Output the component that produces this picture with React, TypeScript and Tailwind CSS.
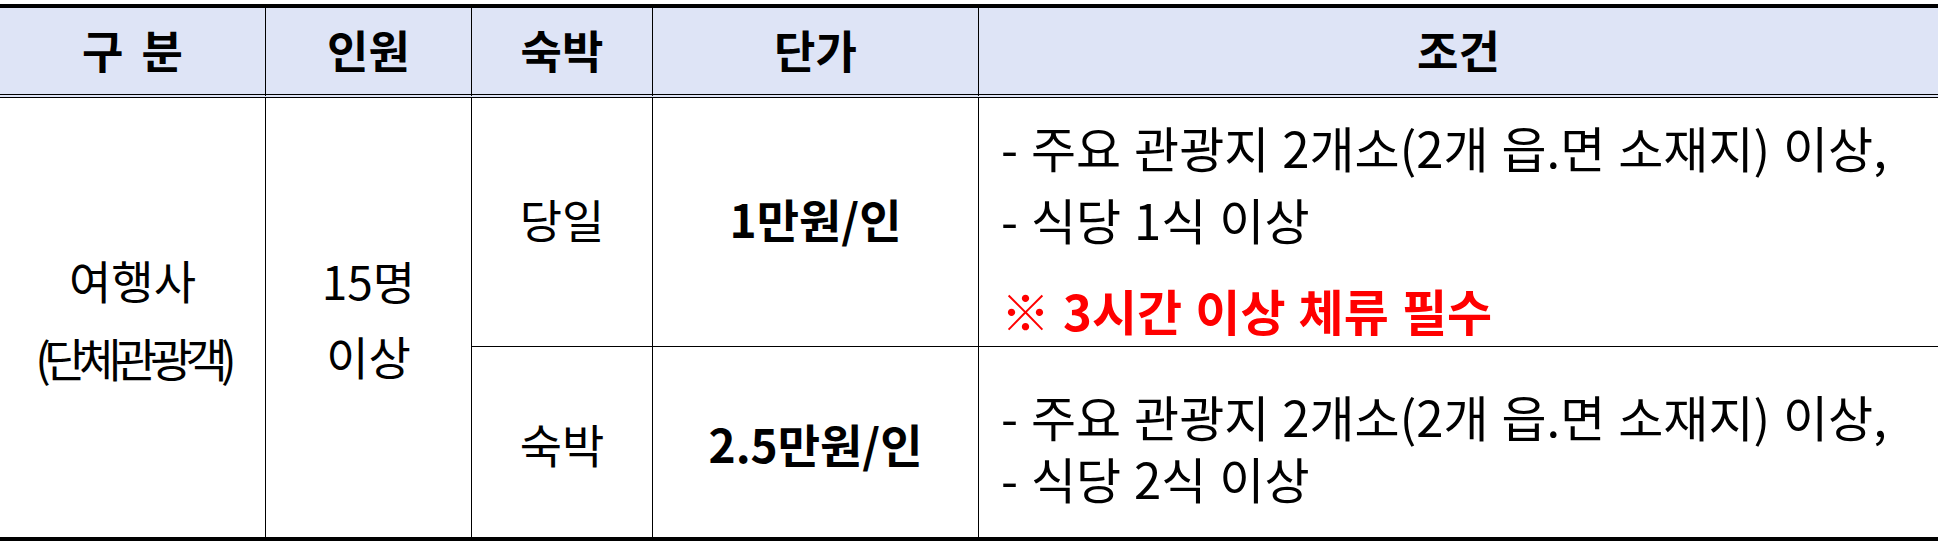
const rows = [
  {
    stay: '당일',
    price: '1만원/인',
  },
  {
    stay: '숙박',
    price: '2.5만원/인',
  },
]

export default function App() {
  return (
    <div className="h-[548px] w-[1938px] bg-white pt-[4px] font-['Noto_Sans_CJK_KR',sans-serif] text-black">
      <table className="w-full table-fixed border-separate border-spacing-0 border-y-4 border-black">
        <colgroup>
          <col className="w-[266px]" />
          <col className="w-[206px]" />
          <col className="w-[181px]" />
          <col className="w-[326px]" />
          <col />
        </colgroup>
        <thead>
          <tr className="h-[90px] bg-[#dee4f6] text-[45px] font-bold leading-none">
            <th className="border-r border-b-4 border-double border-black p-0 pb-[4px] font-bold [word-spacing:8px]">구 분</th>
            <th className="border-r border-b-4 border-double border-black p-0 pb-[4px] font-bold">인원</th>
            <th className="border-r border-b-4 border-double border-black p-0 pb-[4px] font-bold">숙박</th>
            <th className="border-r border-b-4 border-double border-black p-0 pb-[4px] font-bold">단가</th>
            <th className="border-b-4 border-double border-black p-0 pb-[4px] font-bold">조건</th>
          </tr>
        </thead>
        <tbody className="text-[46px]">
          <tr className="h-[248px]">
            <td rowSpan={2} className="border-r border-black p-0 text-center align-middle">
              <div className="leading-[78px]">여행사</div>
              <div className="leading-[78px] tracking-[-0.15em]">(단체관광객)</div>
            </td>
            <td rowSpan={2} className="border-r border-black p-0 text-center align-middle">
              <div className="leading-[75px]">15명</div>
              <div className="leading-[75px]">이상</div>
            </td>
            <td className="border-r border-black p-0 pb-[8px] text-center align-middle leading-none">{rows[0].stay}</td>
            <td className="border-r border-black p-0 pb-[8px] text-center align-middle font-bold leading-none">{rows[0].price}</td>
            <td className="p-0 pl-[22px] align-top text-[49px] [word-spacing:2px]">
              <div className="pt-[23px] leading-[52px]">- 주요 관광지 2개소(2개 읍.면 소재지) 이상,</div>
              <div className="mt-[20px] leading-[52px]">- 식당 1식 이상</div>
              <div className="mt-[40px] font-bold leading-[50px] text-[#ff0000]">※ 3시간 이상 체류 필수</div>
            </td>
          </tr>
          <tr className="h-[191px]">
            <td className="border-t border-r border-black p-0 pt-[2px] text-center align-middle leading-none">{rows[1].stay}</td>
            <td className="border-t border-r border-black p-0 pt-[2px] text-center align-middle font-bold leading-none">{rows[1].price}</td>
            <td className="border-t border-black p-0 pl-[22px] align-top text-[49px] [word-spacing:2px]">
              <p className="pt-[38px] leading-[62px]">
                - 주요 관광지 2개소(2개 읍.면 소재지) 이상,
                <br />- 식당 2식 이상
              </p>
            </td>
          </tr>
        </tbody>
      </table>
    </div>
  )
}
